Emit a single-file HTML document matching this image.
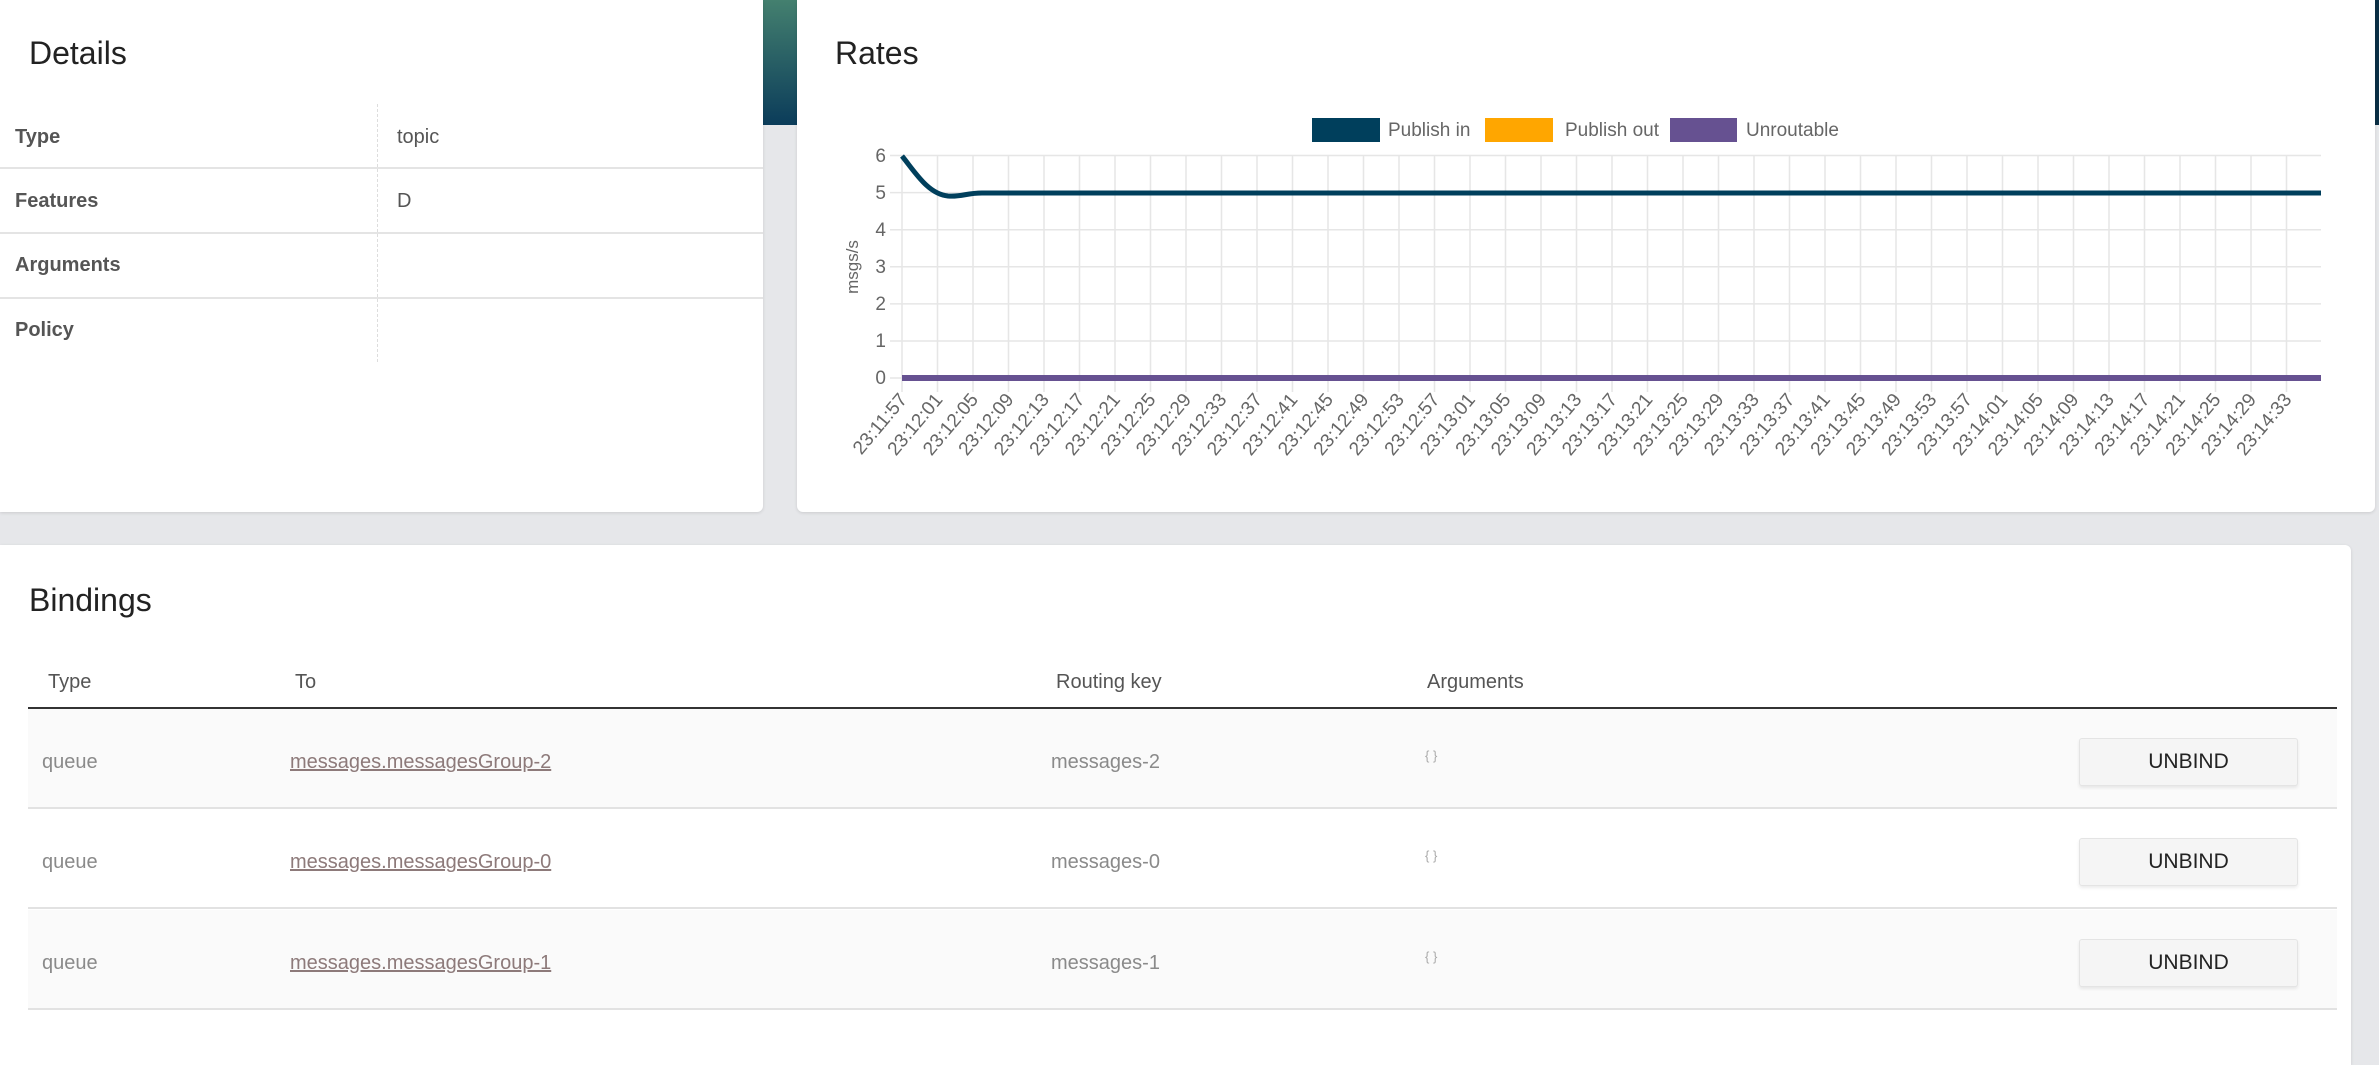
<!DOCTYPE html>
<html><head><meta charset="utf-8"><style>
*{margin:0;padding:0;box-sizing:border-box}
html,body{width:2379px;height:1045px;overflow:hidden;background:#e6e7ea;font-family:"Liberation Sans",sans-serif}
.strip{position:absolute;left:763px;top:0;width:34px;height:125px;background:linear-gradient(#44806f,#0b3c5a)}
.strip2{position:absolute;left:2375px;top:0;width:4px;height:125px;background:#0b2f45}
.card{position:absolute;background:#fff;border-radius:6px;box-shadow:0 1px 3px rgba(0,0,0,.12)}
h2{position:absolute;font-weight:400;font-size:32px;color:#222}
.dl{position:absolute;left:0;width:763px;border-bottom:2px solid #e4e4e4;height:0}
.lab{position:absolute;left:15px;font-weight:bold;font-size:20px;color:#555}
.val{position:absolute;left:397px;font-size:20px;color:#555}
.th{position:absolute;top:671px;font-size:20px;color:#555}
.row{position:absolute;left:28px;width:2309px;height:100px;border-bottom:2px solid #e2e2e2}
.c{position:absolute;font-size:20px;color:#8a8a8a}
.lnk{color:#8d7a7a;text-decoration:underline}
.br{position:absolute;font-size:13px;color:#aaa}
.btn{position:absolute;left:2079px;width:219px;height:48px;background:#f5f5f5;border:1px solid #e4e4e4;border-radius:3px;box-shadow:0 2px 3px rgba(0,0,0,.08);font-size:21px;color:#222;text-align:center;line-height:46px}
</style></head><body>
<div class="strip"></div><div class="strip2"></div>
<div class="card" style="left:0;top:0;width:763px;height:512px;border-radius:0 0 6px 0">
 <h2 style="left:29px;top:35px">Details</h2>
 <div style="position:absolute;left:377px;top:104px;height:258px;border-left:1px dashed #ddd"></div>
 <div class="dl" style="top:167px"></div><div class="dl" style="top:232px"></div><div class="dl" style="top:297px"></div>
 <div class="lab" style="top:126px">Type</div><div class="val" style="top:126px">topic</div>
 <div class="lab" style="top:190px">Features</div><div class="val" style="top:190px">D</div>
 <div class="lab" style="top:254px">Arguments</div>
 <div class="lab" style="top:319px">Policy</div>
</div>
<div class="card" style="left:797px;top:0;width:1578px;height:512px;border-radius:0 0 6px 6px">
 <h2 style="left:38px;top:35px">Rates</h2>
</div>
<svg style="position:absolute;left:0;top:0" width="2379" height="512" font-family="Liberation Sans,sans-serif">
 <rect x="1312" y="118" width="68" height="24" fill="#003f5c"/><text x="1388" y="136" font-size="19" fill="#666">Publish in</text>
 <rect x="1485" y="118" width="68" height="24" fill="#ffa600"/><text x="1565" y="136" font-size="19" fill="#666">Publish out</text>
 <rect x="1670" y="118" width="67" height="24" fill="#665191"/><text x="1746" y="136" font-size="19" fill="#666">Unroutable</text>
 <g stroke="#e6e6e6" stroke-width="1.5">
  <line x1="890" x2="2321" y1="155.5" y2="155.5"/><line x1="890" x2="2321" y1="192.6" y2="192.6"/><line x1="890" x2="2321" y1="229.7" y2="229.7"/><line x1="890" x2="2321" y1="266.8" y2="266.8"/><line x1="890" x2="2321" y1="303.9" y2="303.9"/><line x1="890" x2="2321" y1="341" y2="341"/><line x1="890" x2="2321" y1="378" y2="378"/>
 </g>
 <g stroke="#e6e6e6" stroke-width="1.5">
  <line x1="902" x2="902" y1="155" y2="392"/><line x1="937.5" x2="937.5" y1="155" y2="392"/><line x1="973" x2="973" y1="155" y2="392"/><line x1="1008.5" x2="1008.5" y1="155" y2="392"/><line x1="1044" x2="1044" y1="155" y2="392"/><line x1="1079.5" x2="1079.5" y1="155" y2="392"/><line x1="1115" x2="1115" y1="155" y2="392"/><line x1="1150.5" x2="1150.5" y1="155" y2="392"/><line x1="1186" x2="1186" y1="155" y2="392"/><line x1="1221.5" x2="1221.5" y1="155" y2="392"/><line x1="1257" x2="1257" y1="155" y2="392"/><line x1="1292.5" x2="1292.5" y1="155" y2="392"/><line x1="1328" x2="1328" y1="155" y2="392"/><line x1="1363.5" x2="1363.5" y1="155" y2="392"/><line x1="1399" x2="1399" y1="155" y2="392"/><line x1="1434.5" x2="1434.5" y1="155" y2="392"/><line x1="1470" x2="1470" y1="155" y2="392"/><line x1="1505.5" x2="1505.5" y1="155" y2="392"/><line x1="1541" x2="1541" y1="155" y2="392"/><line x1="1576.5" x2="1576.5" y1="155" y2="392"/><line x1="1612" x2="1612" y1="155" y2="392"/><line x1="1647.5" x2="1647.5" y1="155" y2="392"/><line x1="1683" x2="1683" y1="155" y2="392"/><line x1="1718.5" x2="1718.5" y1="155" y2="392"/><line x1="1754" x2="1754" y1="155" y2="392"/><line x1="1789.5" x2="1789.5" y1="155" y2="392"/><line x1="1825" x2="1825" y1="155" y2="392"/><line x1="1860.5" x2="1860.5" y1="155" y2="392"/><line x1="1896" x2="1896" y1="155" y2="392"/><line x1="1931.5" x2="1931.5" y1="155" y2="392"/><line x1="1967" x2="1967" y1="155" y2="392"/><line x1="2002.5" x2="2002.5" y1="155" y2="392"/><line x1="2038" x2="2038" y1="155" y2="392"/><line x1="2073.5" x2="2073.5" y1="155" y2="392"/><line x1="2109" x2="2109" y1="155" y2="392"/><line x1="2144.5" x2="2144.5" y1="155" y2="392"/><line x1="2180" x2="2180" y1="155" y2="392"/><line x1="2215.5" x2="2215.5" y1="155" y2="392"/><line x1="2251" x2="2251" y1="155" y2="392"/><line x1="2286.5" x2="2286.5" y1="155" y2="392"/>
 </g>
 <g font-size="19" fill="#666" text-anchor="end">
  <text x="886" y="162">6</text><text x="886" y="199">5</text><text x="886" y="236">4</text><text x="886" y="273">3</text><text x="886" y="310">2</text><text x="886" y="347">1</text><text x="886" y="384">0</text>
 </g>
 <text transform="translate(858,267) rotate(-90)" font-size="17" fill="#666" text-anchor="middle">msgs/s</text>
 <path d="M902,156 C915,172 928,194 948,196 C962,197 966,193 982,193 L2321,193" fill="none" stroke="#003f5c" stroke-width="5"/>
 <line x1="902" x2="2321" y1="378" y2="378" stroke="#665191" stroke-width="6"/>
 <g font-size="19" fill="#666" text-anchor="end">
  <text transform="translate(908,400) rotate(-50)">23:11:57</text>
  <text transform="translate(943.5,400) rotate(-50)">23:12:01</text>
  <text transform="translate(979,400) rotate(-50)">23:12:05</text>
  <text transform="translate(1014.5,400) rotate(-50)">23:12:09</text>
  <text transform="translate(1050,400) rotate(-50)">23:12:13</text>
  <text transform="translate(1085.5,400) rotate(-50)">23:12:17</text>
  <text transform="translate(1121,400) rotate(-50)">23:12:21</text>
  <text transform="translate(1156.5,400) rotate(-50)">23:12:25</text>
  <text transform="translate(1192,400) rotate(-50)">23:12:29</text>
  <text transform="translate(1227.5,400) rotate(-50)">23:12:33</text>
  <text transform="translate(1263,400) rotate(-50)">23:12:37</text>
  <text transform="translate(1298.5,400) rotate(-50)">23:12:41</text>
  <text transform="translate(1334,400) rotate(-50)">23:12:45</text>
  <text transform="translate(1369.5,400) rotate(-50)">23:12:49</text>
  <text transform="translate(1405,400) rotate(-50)">23:12:53</text>
  <text transform="translate(1440.5,400) rotate(-50)">23:12:57</text>
  <text transform="translate(1476,400) rotate(-50)">23:13:01</text>
  <text transform="translate(1511.5,400) rotate(-50)">23:13:05</text>
  <text transform="translate(1547,400) rotate(-50)">23:13:09</text>
  <text transform="translate(1582.5,400) rotate(-50)">23:13:13</text>
  <text transform="translate(1618,400) rotate(-50)">23:13:17</text>
  <text transform="translate(1653.5,400) rotate(-50)">23:13:21</text>
  <text transform="translate(1689,400) rotate(-50)">23:13:25</text>
  <text transform="translate(1724.5,400) rotate(-50)">23:13:29</text>
  <text transform="translate(1760,400) rotate(-50)">23:13:33</text>
  <text transform="translate(1795.5,400) rotate(-50)">23:13:37</text>
  <text transform="translate(1831,400) rotate(-50)">23:13:41</text>
  <text transform="translate(1866.5,400) rotate(-50)">23:13:45</text>
  <text transform="translate(1902,400) rotate(-50)">23:13:49</text>
  <text transform="translate(1937.5,400) rotate(-50)">23:13:53</text>
  <text transform="translate(1973,400) rotate(-50)">23:13:57</text>
  <text transform="translate(2008.5,400) rotate(-50)">23:14:01</text>
  <text transform="translate(2044,400) rotate(-50)">23:14:05</text>
  <text transform="translate(2079.5,400) rotate(-50)">23:14:09</text>
  <text transform="translate(2115,400) rotate(-50)">23:14:13</text>
  <text transform="translate(2150.5,400) rotate(-50)">23:14:17</text>
  <text transform="translate(2186,400) rotate(-50)">23:14:21</text>
  <text transform="translate(2221.5,400) rotate(-50)">23:14:25</text>
  <text transform="translate(2257,400) rotate(-50)">23:14:29</text>
  <text transform="translate(2292.5,400) rotate(-50)">23:14:33</text>
 </g>
</svg>
<div class="card" style="left:0;top:545px;width:2351px;height:520px;border-radius:0 6px 0 0">
 <h2 style="left:29px;top:37px">Bindings</h2>
</div>
<div class="th" style="left:48px">Type</div>
<div class="th" style="left:295px">To</div>
<div class="th" style="left:1056px">Routing key</div>
<div class="th" style="left:1427px">Arguments</div>
<div style="position:absolute;left:28px;top:707px;width:2309px;border-top:2px solid #333"></div>
<div class="row" style="top:709px;background:#fafafa"></div>
<div class="row" style="top:809px"></div>
<div class="row" style="top:910px;background:#fafafa"></div>
<div class="c" style="left:42px;top:751px">queue</div><div class="c lnk" style="left:290px;top:751px">messages.messagesGroup-2</div><div class="c" style="left:1051px;top:751px">messages-2</div><div class="br" style="left:1425px;top:748px">{ }</div><div class="btn" style="top:738px">UNBIND</div>
<div class="c" style="left:42px;top:851px">queue</div><div class="c lnk" style="left:290px;top:851px">messages.messagesGroup-0</div><div class="c" style="left:1051px;top:851px">messages-0</div><div class="br" style="left:1425px;top:848px">{ }</div><div class="btn" style="top:838px">UNBIND</div>
<div class="c" style="left:42px;top:952px">queue</div><div class="c lnk" style="left:290px;top:952px">messages.messagesGroup-1</div><div class="c" style="left:1051px;top:952px">messages-1</div><div class="br" style="left:1425px;top:949px">{ }</div><div class="btn" style="top:939px">UNBIND</div>
</body></html>
